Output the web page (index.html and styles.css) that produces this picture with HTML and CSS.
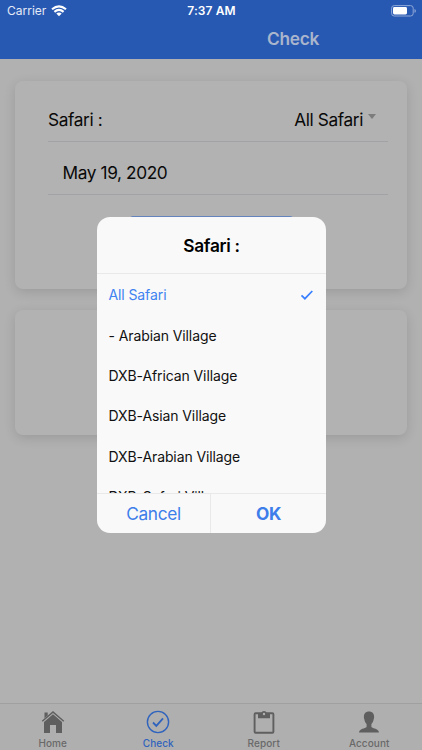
FILE: index.html
```html
<!DOCTYPE html>
<html lang="en">
<head>
<meta charset="utf-8">
<title>Check</title>
<link rel="stylesheet" href="styles.css">
</head>
<body>
<div class="app">
  <header class="header">
    <div class="status">
      <div class="carrier"><span>Carrier</span>
        <svg width="16" height="12" viewBox="0 0 16 12" fill="none" stroke="#fff" stroke-width="2.1"><path d="M1 4.3Q8-1.7 15 4.3M3.4 6.9Q8 3 12.6 6.9"/><path d="M8 11.2L5.3 8.6Q8 6.4 10.7 8.6Z" fill="#fff" stroke="none"/></svg>
      </div>
      <span class="time">7:37 AM</span>
      <svg class="battery" width="26" height="12" viewBox="0 0 26 12"><rect x=".6" y=".6" width="21.6" height="10.4" rx="2.6" fill="none" stroke="#8fa8d8"/><rect x="2" y="2.1" width="14" height="7.4" rx="1.4" fill="#fff"/><path d="M23.5 4v3.8q1.4-.6 1.4-1.9T23.500 4z" fill="#8fa8d8"/></svg>
    </div>
    <h1 class="title">Check</h1>
  </header>
  <main class="content">
    <section class="card filters">
      <div class="row"><span>Safari :</span><span class="select">All Safari<i class="caret"></i></span></div>
      <div class="row date"><span class="date-text">May 19, 2020</span></div>
      <div class="button"></div>
    </section>
    <section class="card results"></section>
  </main>
  <nav class="tabs">
    <div class="tab"><svg width="24" height="24" viewBox="0 0 24 24" fill="#5f5f5f"><path d="M3.500 2.500h3.200v3L3.500 8.300z"/><path d="M12 1L.8 10.700l.9 1L12 2.900l10.300 8.800.9-1z"/><path d="M12 4.200L3 11.900V23h6v-8h6v8h6V11.900z"/></svg><span>Home</span></div>
    <div class="tab active"><svg width="24" height="24" viewBox="0 0 24 24" fill="none" stroke="#2f63bd"><circle cx="12" cy="12" r="10.600" stroke-width="1.400"/><path d="M7 12.500l3.300 3.400L17 8.300" stroke-width="1.800"/></svg><span>Check</span></div>
    <div class="tab"><svg width="24" height="24" viewBox="0 0 24 24"><rect x="2.600" y="3.300" width="18.800" height="19.500" rx="1" fill="none" stroke="#5f5f5f" stroke-width="1.900"/><path d="M6 3h3.300a2.800 2.800 0 0 1 5.400 0H18v5.300H6z" fill="#5f5f5f"/><circle cx="12" cy="4" r="1.200" fill="#b1b1b1"/></svg><span>Report</span></div>
    <div class="tab"><svg width="24" height="24" viewBox="0 0 24 24" fill="#5f5f5f"><path d="M12 1.500c-3.300 0-5.200 2.100-5.100 5.400 0 1 .1 1.300.5 2.600.2 1.800 1 3.200 2.200 4.400v3.100C8.300 18.600 2.200 18.500 2 22.500h20c-.2-4-6.300-3.900-7.600-5.500v-3.100c1.200-1.200 2-2.600 2.200-4.400.4-1.300.5-1.600.5-2.600.1-3.300-1.800-5.400-5.100-5.400z"/></svg><span>Account</span></div>
  </nav>
  <div class="dialog">
    <h2 class="dialog-title">Safari :</h2>
    <ul class="options">
      <li class="selected"><span>All Safari</span><svg width="14" height="12" viewBox="0 0 14 12" fill="none" stroke="#3880ff" stroke-width="1.700"><path d="M1.500 6.300l3.400 3.400L12.300 2"/></svg></li>
      <li>- Arabian Village</li>
      <li>DXB-African Village</li>
      <li>DXB-Asian Village</li>
      <li>DXB-Arabian Village</li>
      <li>DXB-Safari Village</li>
    </ul>
    <div class="actions"><span class="cancel">Cancel</span><span class="ok">OK</span></div>
  </div>
</div>
</body>
</html>
```
FILE: styles.css
```css
* { box-sizing: border-box; }
body { margin: 0; font-family: Inter, "Liberation Sans", sans-serif; color: #090909; }
.app { position: relative; width: 422px; height: 750px; background: #b1b1b1; display: flex; flex-direction: column; overflow: hidden; }
.header { height: 59px; background: #2859b2; color: #fff; }
.status { display: grid; grid-template-columns: 1fr auto 1fr; height: 21px; padding: 0 5px 0 7px; align-items: center; }
.carrier { display: flex; align-items: center; gap: 5px; font-size: 12px; letter-spacing: 0; color: #e4eaf6; }
.time { font-size: 12px; font-weight: 600; letter-spacing: .1px; margin-right: 1px; }
.battery { justify-self: end; }
.title { margin: 6px 0 0 164px; text-align: center; font-size: 17.3px; font-weight: 600; line-height: 24px; letter-spacing: -.3px; color: #a9b5cc; }
.content { flex: 1; padding: 22px 15px 0; }
.card { border-radius: 8px; background: #b2b2b2; box-shadow: 0 3px 12px rgba(0,0,0,.13); }
.filters { height: 208px; padding: 17px 19px 0 33px; margin-bottom: 21px; }
.results { height: 125px; }
.row { display: flex; justify-content: space-between; align-items: center; height: 44px; border-bottom: 1px solid #a1a2a5; font-size: 17.3px; letter-spacing: -.4px; }
.date { height: 53px; padding: 9px 0 0 14.500px; }
.select { display: flex; align-items: center; gap: 5px; padding-right: 12px; }
.caret { border: 4.500px solid transparent; border-top: 5px solid #7c7c7c; border-bottom: 0; margin-top: -7px; }
.button { width: 163px; height: 40px; margin: 21px 0 0 82px; border-radius: 3px; background: #6384bd; }
.tabs { display: flex; height: 47px; border-top: 1px solid #a0a0a0; background: #afafaf; }
.tab { flex: 1; display: flex; flex-direction: column; align-items: center; padding-top: 6px; font-size: 10px; font-weight: 500; line-height: 14px; letter-spacing: .1px; color: #696969; }
.tab span { margin-top: 2px; }
.active { color: #2f63bd; }
.dialog { position: absolute; left: 97px; top: 217px; width: 229px; height: 316px; border-radius: 13px; background: #f9f9f9; overflow: hidden; display: flex; flex-direction: column; }
.dialog-title { margin: 0; height: 56px; line-height: 57px; text-align: center; font-size: 17.3px; font-weight: 600; letter-spacing: -.3px; color: #000; }
.options { list-style: none; margin: 0; padding: 1px 12px 0 11.500px; height: 220px; overflow: hidden; border-top: 1px solid #e9e9e9; font-size: 14px; letter-spacing: -.1px; color: #111; }
.options li { height: 40.350px; padding-bottom: .6px; display: flex; align-items: center; justify-content: space-between; }
.options .selected { color: #4083f1; }
.actions { display: grid; grid-template-columns: 114px 1fr; height: 40px; border-top: 1px solid #e9e9e9; color: #3d7eea; font-size: 17.3px; line-height: 39px; text-align: center; letter-spacing: -.35px; }
.cancel { border-right: 1px solid #e9e9e9; }
.ok { font-weight: 700; }
```
